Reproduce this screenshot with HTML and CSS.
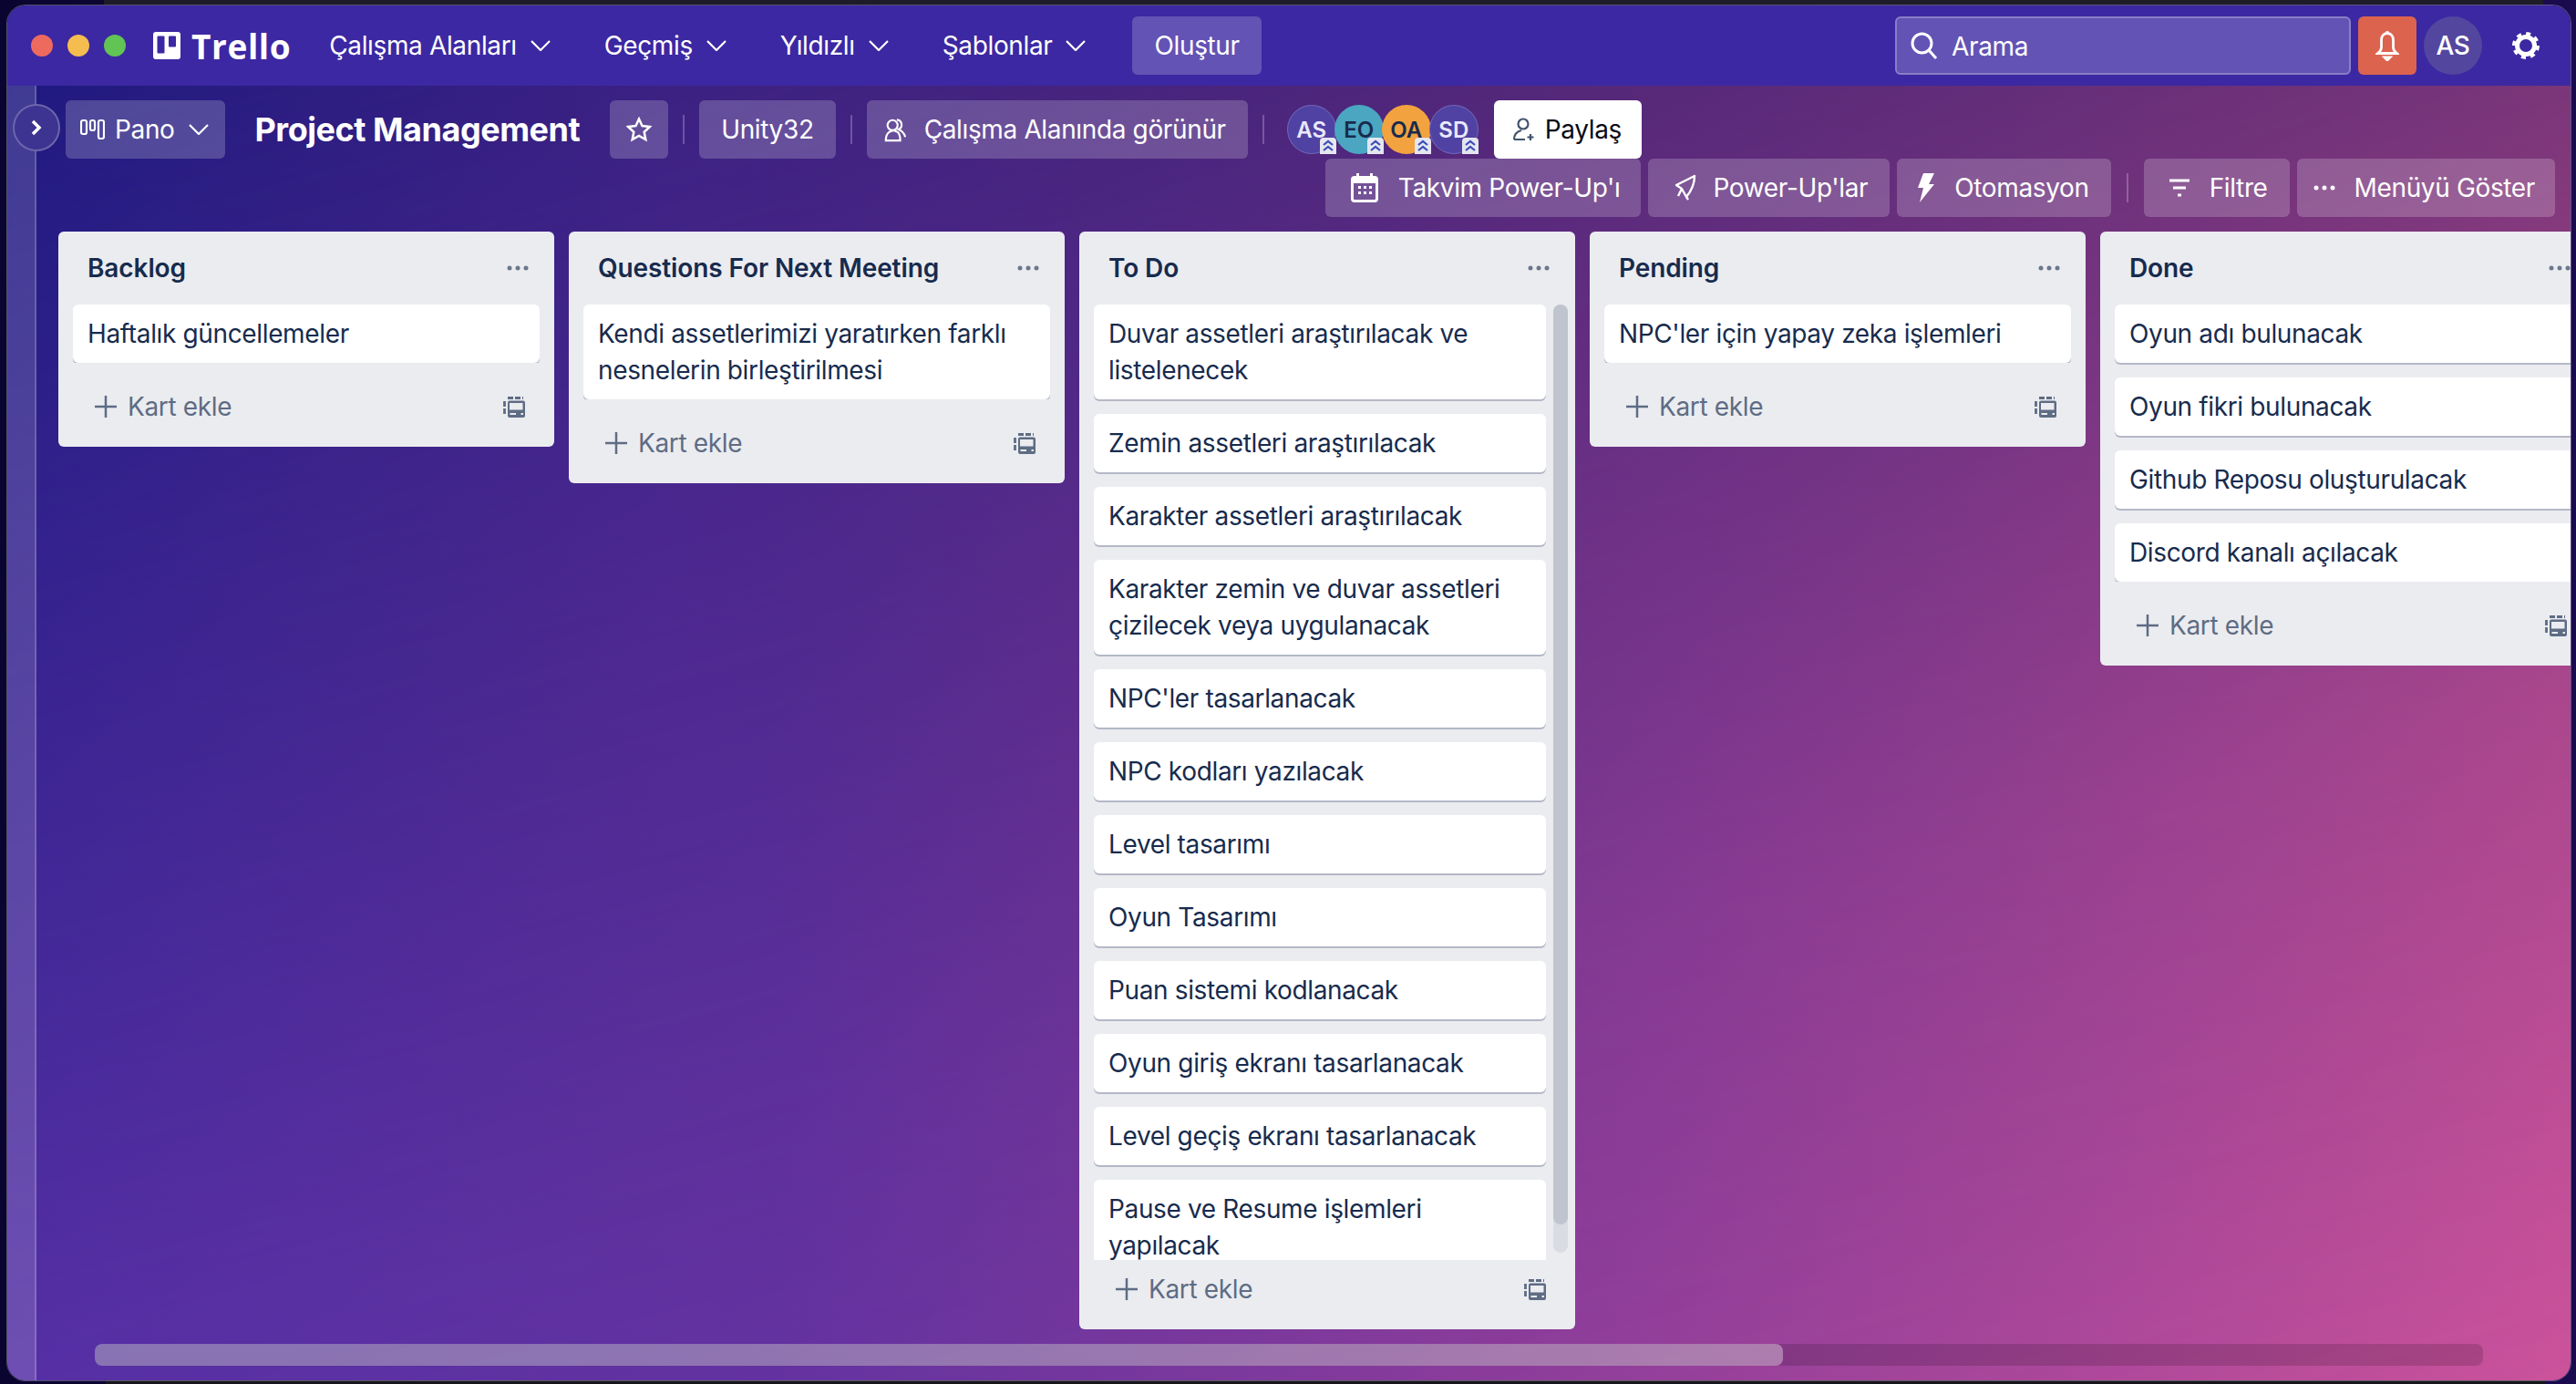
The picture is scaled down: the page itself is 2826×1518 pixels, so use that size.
FILE: index.html
```html
<!DOCTYPE html>
<html lang="tr">
<head>
<meta charset="utf-8">
<title>Project Management | Trello</title>
<link rel="stylesheet" href="styles.css">
</head>
<body>
<div class="window">
  <header class="topbar">
    <div class="lights"><span class="light red"></span><span class="light yellow"></span><span class="light green"></span></div>
    <div class="logo">
      <svg class="logo-mark" viewBox="0 0 30 30"><path fill="#fff" fill-rule="evenodd" d="M3 0h24a3 3 0 0 1 3 3v24a3 3 0 0 1-3 3H3a3 3 0 0 1-3-3V3a3 3 0 0 1 3-3zm2.500 4.500a1 1 0 0 0-1 1v17a1 1 0 0 0 1 1h6a1 1 0 0 0 1-1v-17a1 1 0 0 0-1-1zm12.500 0a1 1 0 0 0-1 1v10a1 1 0 0 0 1 1h6a1 1 0 0 0 1-1v-10a1 1 0 0 0-1-1z"/></svg>
      <span class="logo-text">Trello</span>
    </div>
    <nav class="nav">
      <a class="nav-item">Çalışma Alanları<svg class="chev" viewBox="0 0 22 12"><path d="M1 1l10 10L21 1"/></svg></a>
      <a class="nav-item">Geçmiş<svg class="chev" viewBox="0 0 22 12"><path d="M1 1l10 10L21 1"/></svg></a>
      <a class="nav-item">Yıldızlı<svg class="chev" viewBox="0 0 22 12"><path d="M1 1l10 10L21 1"/></svg></a>
      <a class="nav-item">Şablonlar<svg class="chev" viewBox="0 0 22 12"><path d="M1 1l10 10L21 1"/></svg></a>
    </nav>
    <button class="create">Oluştur</button>
    <div class="top-right">
      <div class="search">
        <svg class="search-icon" viewBox="0 0 30 30"><circle cx="12.500" cy="12.500" r="10.500"/><path d="M20 20l8 9"/></svg>
        <span class="search-text">Arama</span>
      </div>
      <button class="bell"><svg viewBox="0 0 26 34"><path d="M13 3.500c-4.500 0-6.500 3.500-6.500 7.500v8c0 2.500-1.500 4.500-4 6.500h21c-2.500-2-4-4-4-6.500v-8c0-4-2-7.500-6.500-7.500z"/><path class="solid" d="M13 1v2M10 30h6l-3 3z"/></svg></button>
      <div class="me">AS</div>
      <svg class="gear" viewBox="0 0 32 32"><circle class="gear-ring" cx="16" cy="16" r="9.500"/><circle class="gear-teeth" cx="16" cy="16" r="12.500" pathLength="48" /></svg>
    </div>
  </header>

  <main class="board">
    <div class="rail"></div>
    <button class="rail-toggle"><svg viewBox="0 0 12 18"><path d="M2 2l7 7-7 7"/></svg></button>

    <div class="board-row">
      <button class="btn btn-pano">
        <svg class="pano-icon" viewBox="0 0 27 24"><rect x="1" y="2" width="6" height="15" rx="2"/><rect x="11" y="2" width="5" height="11" rx="2"/><rect x="20" y="2" width="6" height="20" rx="2"/></svg>
        Pano
        <svg class="chev" viewBox="0 0 22 12"><path d="M1 1l10 10L21 1"/></svg>
      </button>
      <h1 class="board-title">Project Management</h1>
      <button class="btn btn-star"><svg viewBox="0 0 28 28"><path d="M14 2.500l3.500 7.600 8.200 1-6 5.700 1.600 8.200-7.300-4.100-7.300 4.100 1.600-8.200-6-5.700 8.200-1z"/></svg></button>
      <span class="sep"></span>
      <button class="btn">Unity32</button>
      <span class="sep"></span>
      <button class="btn btn-ws">
        <svg class="ws-icon" viewBox="0 0 28 30"><circle cx="11" cy="10" r="6"/><path d="M16 3.500a6 6 0 0 1 2 11.500c4 1.500 7 5 8 9M3 28h17c0-3-1-8-3-10l-5-2-5 2c-3 2-4 7-4 10z"/></svg>
        Çalışma Alanında görünür
      </button>
      <span class="sep sep-avatars"></span>
      <div class="avatars">
        <div class="avatar av-indigo">AS<span class="badge"><svg viewBox="0 0 14 14"><path d="M2 6l5-4 5 4M2 12l5-4 5 4"/></svg></span></div>
        <div class="avatar av-teal">EO<span class="badge"><svg viewBox="0 0 14 14"><path d="M2 6l5-4 5 4M2 12l5-4 5 4"/></svg></span></div>
        <div class="avatar av-orange">OA<span class="badge"><svg viewBox="0 0 14 14"><path d="M2 6l5-4 5 4M2 12l5-4 5 4"/></svg></span></div>
        <div class="avatar av-indigo">SD<span class="badge"><svg viewBox="0 0 14 14"><path d="M2 6l5-4 5 4M2 12l5-4 5 4"/></svg></span></div>
      </div>
      <button class="btn btn-share">
        <svg class="share-icon" viewBox="0 0 26 26"><circle cx="12" cy="7" r="5.500"/><path d="M2 24c0-7 4-9 8-10M2 24h12M20 18v7M16.500 21.500h7"/></svg>
        Paylaş
      </button>
    </div>

    <div class="board-row board-row-tools">
      <button class="btn btn-cal">
        <svg class="cal-icon" viewBox="0 0 30 32"><path fill="#fff" fill-rule="evenodd" d="M6 0h3v3h12V0h3v3h2a4 4 0 0 1 4 4v21a4 4 0 0 1-4 4H4a4 4 0 0 1-4-4V7a4 4 0 0 1 4-4h2zM3 11v17a1 1 0 0 0 1 1h22a1 1 0 0 0 1-1V11zm5 3h3v3H8zm6 0h3v3h-3zm6 0h3v3h-3zM8 20h3v3H8zm6 0h3v3h-3zm6 0h3v3h-3z"/></svg>
        Takvim Power-Up'ı
      </button>
      <button class="btn btn-power">
        <svg class="rocket-icon" viewBox="0 0 26 30"><path d="M24 2L4 12l6 4 5 9c5-6 9-14 9-23zM10 16L6 24M15 25l2 3"/></svg>
        Power-Up'lar
      </button>
      <button class="btn btn-auto">
        <svg class="bolt-icon" viewBox="0 0 20 32"><path d="M7 0h12l-6 12h6L3 32l4-16H1z"/></svg>
        Otomasyon
      </button>
      <span class="sep sep-tools"></span>
      <button class="btn btn-filter">
        <svg class="filter-icon" viewBox="0 0 24 20"><path d="M1 2h22M5 10h14M10 18h4"/></svg>
        Filtre
      </button>
      <button class="btn btn-menu">
        <svg class="dots-icon" viewBox="0 0 24 6"><circle cx="3" cy="3" r="2.500"/><circle cx="12" cy="3" r="2.500"/><circle cx="21" cy="3" r="2.500"/></svg>
        Menüyü Göster
      </button>
    </div>

    <div class="lists">
      <section class="list">
        <header class="list-head"><h2>Backlog</h2><svg class="list-dots" viewBox="0 0 24 6"><circle cx="3" cy="3" r="2.500"/><circle cx="12" cy="3" r="2.500"/><circle cx="21" cy="3" r="2.500"/></svg></header>
        <div class="cards">
          <div class="card">Haftalık güncellemeler</div>
        </div>
        <footer class="list-foot">
          <svg class="plus" viewBox="0 0 24 24"><path d="M12 0v24M0 12h24"/></svg><span>Kart ekle</span>
          <svg class="tpl" viewBox="0 0 24 24"><path class="tpl-dash" d="M5 2.500h17M1.500 6v16"/><path class="tpl-body" d="M7 5.500h15a2 2 0 0 1 2 2V22a2 2 0 0 1-2 2H7a2 2 0 0 1-2-2V7.500a2 2 0 0 1 2-2z"/><path class="tpl-hole" d="M7 8h14.500v7.500H7zM7.500 19H14v2H7.500zM19.500 19H22v2h-2.500z"/></svg>
        </footer>
      </section>

      <section class="list">
        <header class="list-head"><h2>Questions For Next Meeting</h2><svg class="list-dots" viewBox="0 0 24 6"><circle cx="3" cy="3" r="2.500"/><circle cx="12" cy="3" r="2.500"/><circle cx="21" cy="3" r="2.500"/></svg></header>
        <div class="cards">
          <div class="card">Kendi assetlerimizi yaratırken farklı nesnelerin birleştirilmesi</div>
        </div>
        <footer class="list-foot">
          <svg class="plus" viewBox="0 0 24 24"><path d="M12 0v24M0 12h24"/></svg><span>Kart ekle</span>
          <svg class="tpl" viewBox="0 0 24 24"><path class="tpl-dash" d="M5 2.500h17M1.500 6v16"/><path class="tpl-body" d="M7 5.500h15a2 2 0 0 1 2 2V22a2 2 0 0 1-2 2H7a2 2 0 0 1-2-2V7.500a2 2 0 0 1 2-2z"/><path class="tpl-hole" d="M7 8h14.500v7.500H7zM7.500 19H14v2H7.500zM19.500 19H22v2h-2.500z"/></svg>
        </footer>
      </section>

      <section class="list list-scroll">
        <header class="list-head"><h2>To Do</h2><svg class="list-dots" viewBox="0 0 24 6"><circle cx="3" cy="3" r="2.500"/><circle cx="12" cy="3" r="2.500"/><circle cx="21" cy="3" r="2.500"/></svg></header>
        <div class="cards">
          <div class="card">Duvar assetleri araştırılacak ve listelenecek</div>
          <div class="card">Zemin assetleri araştırılacak</div>
          <div class="card">Karakter assetleri araştırılacak</div>
          <div class="card">Karakter zemin ve duvar assetleri çizilecek veya uygulanacak</div>
          <div class="card">NPC'ler tasarlanacak</div>
          <div class="card">NPC kodları yazılacak</div>
          <div class="card">Level tasarımı</div>
          <div class="card">Oyun Tasarımı</div>
          <div class="card">Puan sistemi kodlanacak</div>
          <div class="card">Oyun giriş ekranı tasarlanacak</div>
          <div class="card">Level geçiş ekranı tasarlanacak</div>
          <div class="card">Pause ve Resume işlemleri yapılacak</div>
        </div>
        <div class="vscroll"><div class="vthumb"></div></div>
        <footer class="list-foot">
          <svg class="plus" viewBox="0 0 24 24"><path d="M12 0v24M0 12h24"/></svg><span>Kart ekle</span>
          <svg class="tpl" viewBox="0 0 24 24"><path class="tpl-dash" d="M5 2.500h17M1.500 6v16"/><path class="tpl-body" d="M7 5.500h15a2 2 0 0 1 2 2V22a2 2 0 0 1-2 2H7a2 2 0 0 1-2-2V7.500a2 2 0 0 1 2-2z"/><path class="tpl-hole" d="M7 8h14.500v7.500H7zM7.500 19H14v2H7.500zM19.500 19H22v2h-2.500z"/></svg>
        </footer>
      </section>

      <section class="list">
        <header class="list-head"><h2>Pending</h2><svg class="list-dots" viewBox="0 0 24 6"><circle cx="3" cy="3" r="2.500"/><circle cx="12" cy="3" r="2.500"/><circle cx="21" cy="3" r="2.500"/></svg></header>
        <div class="cards">
          <div class="card">NPC'ler için yapay zeka işlemleri</div>
        </div>
        <footer class="list-foot">
          <svg class="plus" viewBox="0 0 24 24"><path d="M12 0v24M0 12h24"/></svg><span>Kart ekle</span>
          <svg class="tpl" viewBox="0 0 24 24"><path class="tpl-dash" d="M5 2.500h17M1.500 6v16"/><path class="tpl-body" d="M7 5.500h15a2 2 0 0 1 2 2V22a2 2 0 0 1-2 2H7a2 2 0 0 1-2-2V7.500a2 2 0 0 1 2-2z"/><path class="tpl-hole" d="M7 8h14.500v7.500H7zM7.500 19H14v2H7.500zM19.500 19H22v2h-2.500z"/></svg>
        </footer>
      </section>

      <section class="list">
        <header class="list-head"><h2>Done</h2><svg class="list-dots" viewBox="0 0 24 6"><circle cx="3" cy="3" r="2.500"/><circle cx="12" cy="3" r="2.500"/><circle cx="21" cy="3" r="2.500"/></svg></header>
        <div class="cards">
          <div class="card">Oyun adı bulunacak</div>
          <div class="card">Oyun fikri bulunacak</div>
          <div class="card">Github Reposu oluşturulacak</div>
          <div class="card">Discord kanalı açılacak</div>
        </div>
        <footer class="list-foot">
          <svg class="plus" viewBox="0 0 24 24"><path d="M12 0v24M0 12h24"/></svg><span>Kart ekle</span>
          <svg class="tpl" viewBox="0 0 24 24"><path class="tpl-dash" d="M5 2.500h17M1.500 6v16"/><path class="tpl-body" d="M7 5.500h15a2 2 0 0 1 2 2V22a2 2 0 0 1-2 2H7a2 2 0 0 1-2-2V7.500a2 2 0 0 1 2-2z"/><path class="tpl-hole" d="M7 8h14.500v7.500H7zM7.500 19H14v2H7.500zM19.500 19H22v2h-2.500z"/></svg>
        </footer>
      </section>
    </div>

    <div class="hscroll"><div class="hthumb"></div></div>
  </main>
</div>
</body>
</html>
```
FILE: styles.css
```css
* { box-sizing: border-box; }

html, body { height: 100%; margin: 0; }

body {
  padding: 6px 6px 4px 8px;
  overflow: hidden;
  font-family: Inter, "Liberation Sans", sans-serif;
  font-size: 28px;
  letter-spacing: -.36px;
  background:
    linear-gradient(#1e1c28, #1e1c28) 114px 0 / 2676px 5px no-repeat,
    linear-gradient(#17161d, #17161d) 116px 100% / 2676px 4px no-repeat,
    linear-gradient(90deg, #0a0530, #1a0a4e);
}

button { font: inherit; letter-spacing: inherit; border: 0; color: inherit; cursor: pointer; }

.window {
  position: relative;
  display: flex;
  flex-direction: column;
  height: 100%;
  border-radius: 20px;
  overflow: hidden;
  box-shadow: 0 0 0 1px rgba(255, 255, 255, .3);
}

/* top bar */
.topbar {
  flex: none;
  display: flex;
  align-items: center;
  height: 88px;
  padding: 0 17px 0 26px;
  background: #3c28a2;
  color: #fff;
}

.lights { display: flex; gap: 16px; }
.light { width: 24px; height: 24px; border-radius: 50%; }
.red { background: #ee6a5f; }
.yellow { background: #f5bd4f; }
.green { background: #61c454; }

.logo { display: flex; align-items: center; gap: 12px; margin-left: 30px; }
.logo-mark { width: 30px; height: 30px; }
.logo-text { font-family: "Open Sans", sans-serif; font-weight: 700; font-size: 37px; line-height: 1; letter-spacing: .6px; }

.nav { display: flex; gap: 59px; margin-left: 42px; }
.nav-item { display: flex; align-items: center; gap: 15px; }
.chev { width: 22px; height: 12px; fill: none; stroke: currentColor; stroke-width: 2.200; }

.create {
  height: 64px;
  margin-left: 51px;
  padding: 0 24px;
  border-radius: 6px;
  background: rgba(255, 255, 255, .2);
  color: #fff;
}

.top-right { display: flex; align-items: center; margin-left: auto; }

.search {
  display: flex;
  align-items: center;
  gap: 15px;
  width: 500px;
  height: 64px;
  padding-left: 15px;
  border: 2px solid rgba(255, 255, 255, .25);
  border-radius: 6px;
  background: rgba(255, 255, 255, .2);
}
.search-icon { width: 30px; height: 30px; fill: none; stroke: #fff; stroke-width: 3; }
.search-text { margin-top: 2px; }

.bell {
  display: flex;
  align-items: center;
  justify-content: center;
  width: 64px;
  height: 64px;
  margin-left: 8px;
  border-radius: 6px;
  background: #dc634e;
}
.bell svg { width: 26px; height: 34px; fill: none; stroke: #fff; stroke-width: 2.800; }
.bell .solid { fill: #fff; }

.me {
  display: flex;
  align-items: center;
  justify-content: center;
  width: 64px;
  height: 64px;
  margin-left: 8px;
  border-radius: 50%;
  background: #53469f;
  font-weight: 500;
}

.gear { width: 32px; height: 32px; margin: 0 16px 0 32px; fill: none; stroke: #fff; }
.gear-ring { stroke-width: 5; }
.gear-teeth { stroke-width: 5; stroke-dasharray: 3 3; }

/* board */
.board {
  position: relative;
  flex: 1;
  min-height: 0;
  display: flex;
  flex-direction: column;
  padding-top: 16px;
  color: #fff;
  background: linear-gradient(90deg, #1f1a80 0%, #371f7e 26%, #3f206d 62%, #452362 100%);
}
.board::before {
  content: "";
  position: absolute;
  inset: 0;
  background: linear-gradient(90deg, #6737b1 0%, #6d37a8 30%, #9440a0 58%, #cc539b 100%);
  -webkit-mask-image: linear-gradient(165deg, transparent 0%, rgba(0, 0, 0, .35) 30%, rgba(0, 0, 0, .75) 65%, #000 100%);
  mask-image: linear-gradient(165deg, transparent 0%, rgba(0, 0, 0, .35) 30%, rgba(0, 0, 0, .75) 65%, #000 100%);
}

.rail {
  position: absolute;
  left: 0; top: 0; bottom: 0;
  width: 32px;
  background: rgba(255, 255, 255, .15);
  border-right: 2px solid rgba(255, 255, 255, .18);
}
.rail-toggle {
  position: absolute;
  left: 6px; top: 20px;
  display: flex;
  align-items: center;
  justify-content: center;
  width: 52px;
  height: 52px;
  border: 2px solid rgba(255, 255, 255, .25);
  border-radius: 50%;
  background: #3d3390;
}
.rail-toggle svg { width: 12px; height: 18px; fill: none; stroke: #fff; stroke-width: 3.500; }

.board-row { position: relative; display: flex; align-items: center; height: 64px; padding-left: 64px; }
.board-row-tools { justify-content: flex-end; padding-left: 0; padding-right: 17px; gap: 8px; }

.btn {
  display: flex;
  align-items: center;
  height: 64px;
  padding: 0 24px;
  border-radius: 6px;
  background: rgba(255, 255, 255, .2);
  color: #fff;
  white-space: nowrap;
}

.btn-pano { padding: 0 18px 0 16px; gap: 11px; }
.pano-icon { width: 27px; height: 24px; fill: none; stroke: #fff; stroke-width: 2.200; }
.btn-pano .chev { margin-left: 4px; }

.board-title { margin: 0 33px; font-size: 36px; font-weight: 700; line-height: 64px; letter-spacing: -.47px; white-space: nowrap; }

.btn-star { justify-content: center; width: 64px; padding: 0; }
.btn-star svg { width: 28px; height: 28px; fill: none; stroke: #fff; stroke-width: 2.500; }

.sep { flex: none; width: 2px; height: 32px; margin: 0 16px; background: rgba(255, 255, 255, .24); }
.sep-avatars { margin-right: 25px; }
.sep-tools { margin: 0 9px; }

.btn-ws { padding: 0 24px 0 18px; gap: 19px; }
.ws-icon { width: 26px; height: 28px; fill: none; stroke: #fff; stroke-width: 2.300; }

.avatars { display: flex; }
.avatar {
  position: relative;
  display: flex;
  align-items: center;
  justify-content: center;
  width: 54px;
  height: 54px;
  margin-right: -2px;
  border-radius: 50%;
  font-size: 24px;
  font-weight: 600;
  letter-spacing: 0;
}
.av-indigo { background: #4f42a3; color: #e9e8fb; box-shadow: inset 0 0 0 1px rgba(255,255,255,.2); }
.av-teal { background: #4ba6c2; color: #172b4d; }
.av-orange { background: #f3a240; color: #172b4d; }
.badge {
  position: absolute;
  right: 0; bottom: 0;
  display: flex;
  width: 18px;
  height: 18px;
  padding: 2px;
  border-radius: 4px 4px 0 0;
  background: #e4e6f0;
}
.badge svg { fill: none; stroke: #3b4cb8; stroke-width: 2.200; }

.btn-share { margin-left: 19px; padding: 0 22px 0 20px; gap: 10px; background: #fff; color: #0b0b14; }
.share-icon { width: 26px; height: 26px; fill: none; stroke: #42526e; stroke-width: 2.200; }

.btn-cal { padding: 0 22px 0 28px; gap: 22px; }
.cal-icon { width: 30px; height: 32px; }
.btn-power { padding: 0 24px 0 27px; gap: 19px; }
.rocket-icon { width: 26px; height: 30px; fill: none; stroke: #fff; stroke-width: 2.400; stroke-linejoin: round; }
.btn-auto { padding: 0 24px 0 22px; gap: 21px; }
.bolt-icon { width: 20px; height: 32px; fill: #fff; }
.btn-filter { padding: 0 24px 0 27px; gap: 21px; }
.filter-icon { width: 24px; height: 20px; fill: none; stroke: #fff; stroke-width: 2.800; }
.btn-menu { padding: 0 22px 0 18px; gap: 21px; }
.dots-icon { width: 24px; height: 6px; fill: #fff; }

/* lists */
.lists {
  position: relative;
  flex: 1;
  min-height: 0;
  display: flex;
  align-items: flex-start;
  gap: 16px;
  margin-top: 16px;
  padding-left: 56px;
  overflow: hidden;
}

.list {
  position: relative;
  flex: none;
  display: flex;
  flex-direction: column;
  width: 544px;
  max-height: 100%;
  border-radius: 6px;
  background: #ebecf0;
  color: #172b4d;
}

.list-head {
  flex: none;
  display: flex;
  align-items: center;
  justify-content: space-between;
  height: 80px;
  padding: 0 28px 0 32px;
}
.list-head h2 { margin: 0; font-size: 28px; font-weight: 600; line-height: 40px; letter-spacing: -.1px; }
.list-dots { width: 24px; height: 6px; fill: #6b778c; }

.cards {
  min-height: 0;
  display: flex;
  flex-direction: column;
  gap: 16px;
  padding: 0 16px;
  overflow: hidden;
}
.list-scroll .cards { padding-right: 32px; }
.list:not(.list-scroll) .cards { margin-bottom: 16px; }

.card {
  flex: none;
  padding: 12px 16px;
  border-radius: 6px;
  background: #fff;
  box-shadow: 0 2px 0 #b4b8c6;
  line-height: 40px;
}

.list-foot {
  flex: none;
  display: flex;
  align-items: center;
  height: 76px;
  padding: 0 32px 13px 40px;
  color: #5e6c84;
}
.plus { width: 24px; height: 24px; fill: none; stroke: #5e6c84; stroke-width: 2.500; margin-right: 12px; }
.tpl { width: 24px; height: 24px; margin-left: auto; }
.tpl-dash { fill: none; stroke: #5e6c84; stroke-width: 2.800; stroke-dasharray: 6 2; }
.tpl-body { fill: #5e6c84; }
.tpl-hole { fill: #ebecf0; }

.vscroll {
  position: absolute;
  right: 8px; top: 80px; bottom: 84px;
  width: 16px;
  border-radius: 8px;
  background: #dadce3;
}
.vthumb { height: 97%; border-radius: 8px; background: #bfc4ce; }

.hscroll {
  position: relative;
  flex: none;
  height: 24px;
  margin: 16px 96px;
  border-radius: 8px;
  background: rgba(0, 0, 0, .15);
}
.hthumb { width: 70.7%; height: 100%; border-radius: 8px; background: rgba(255, 255, 255, .35); }
```
